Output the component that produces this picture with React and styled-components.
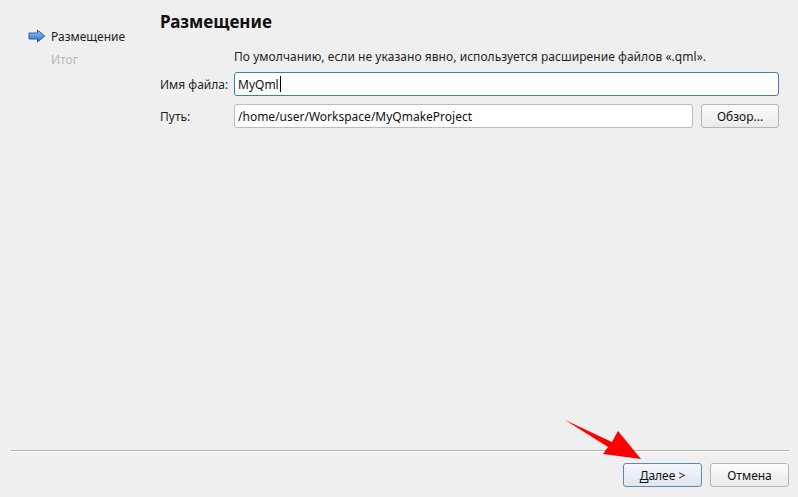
import styled, { createGlobalStyle } from 'styled-components';

const GlobalStyle = createGlobalStyle`
  html, body {
    margin: 0;
    padding: 0;
    background: #efefef;
  }
  body {
    font-family: 'Noto Sans', 'Open Sans', sans-serif;
    color: #1f1f1f;
    font-size: 12px;
  }
`;

const steps = [
  { id: 1, title: 'Размещение', active: true },
  { id: 2, title: 'Итог', active: false },
];

const StepArrow = () => (
  <svg width='18' height='14' viewBox='0 0 18 14'>
    <defs>
      <linearGradient id='ag' x1='0' y1='0' x2='0' y2='1'>
        <stop offset='0' stopColor='#a9cdf7' />
        <stop offset='0.5' stopColor='#5a98e6' />
        <stop offset='1' stopColor='#2f6cc4' />
      </linearGradient>
    </defs>
    <path
      d='M1 4 H9.5 V1 L16.8 7 L9.5 13 V10 H1 Z'
      fill='url(#ag)'
      stroke='#2c5d9f'
      strokeWidth='1'
      strokeLinejoin='round'
    />
  </svg>
);

const Wizard = () => {
  return (
    <Page>
      <Top>
        <Sidebar>
          {steps.map(({ id, title, active }) => (
            <Step key={id} $active={active}>
              <IconSlot>{active && <StepArrow />}</IconSlot>
              {title}
            </Step>
          ))}
        </Sidebar>

        <Main>
          <Title>Размещение</Title>
          <Hint>
            По умолчанию, если не указано явно, используется расширение файлов «.qml».
          </Hint>
          <Form>
            <Label>Имя файла:</Label>
            <Field $focused>
              MyQml
              <Caret />
            </Field>
            <Label>Путь:</Label>
            <PathRow>
              <Field>/home/user/Workspace/MyQmakeProject</Field>
              <Button $w={78}>Обзор...</Button>
            </PathRow>
          </Form>
        </Main>
      </Top>

      <Separator />

      <Footer>
        <Button $w={79} $default>
          <u>Д</u>алее &gt;
        </Button>
        <Button $w={79}>Отмена</Button>
      </Footer>

      <Annotation width='90' height='44' viewBox='0 0 90 44'>
        <path
          d='M0 0 L47 22 L53 11 L76 39 L38 34 L43 27 Z'
          fill='#ff0000'
        />
      </Annotation>
    </Page>
  );
};

const App = () => (
  <>
    <GlobalStyle />
    <Wizard />
  </>
);

const Page = styled.div`
  position: relative;
  width: 798px;
  height: 497px;
  display: flex;
  flex-direction: column;
  overflow: hidden;
`;

const Top = styled.div`
  flex: 1;
  display: flex;
`;

const Sidebar = styled.ul`
  list-style: none;
  margin: 0;
  padding: 27px 0 0 28px;
  width: 122px;
  display: flex;
  flex-direction: column;
  gap: 5px;
`;

const Step = styled.li`
  display: flex;
  align-items: center;
  gap: 5px;
  height: 18px;
  font-size: 12px;
  color: ${({ $active }) => ($active ? '#1f1f1f' : '#b8b8b8')};
`;

const IconSlot = styled.span`
  width: 18px;
  height: 14px;
  display: flex;
`;

const Main = styled.div`
  flex: 1;
  padding: 11px 19px 0 10px;
`;

const Title = styled.h1`
  margin: 0 0 16px;
  font-size: 17px;
  line-height: 22px;
  font-weight: 700;
  color: #111;
`;

const Hint = styled.div`
  margin: 0 0 7px 74px;
  font-size: 12px;
  line-height: 16px;
  letter-spacing: 0.05px;
`;

const Form = styled.div`
  display: grid;
  grid-template-columns: 74px 1fr;
  grid-auto-rows: 24px;
  row-gap: 8px;
  align-items: center;
`;

const Label = styled.div`
  font-size: 12px;
`;

const PathRow = styled.div`
  display: flex;
  gap: 8px;
  align-items: center;
`;

const Field = styled.div`
  flex: 1;
  box-sizing: border-box;
  height: 24px;
  display: flex;
  align-items: center;
  padding: 0 3px;
  background: #fff;
  border: 1px solid ${({ $focused }) => ($focused ? '#3d7fb6' : '#bcbcbc')};
  border-radius: 3px;
  font-size: 12px;
  color: #111;
`;

const Caret = styled.span`
  display: inline-block;
  width: 1px;
  height: 16px;
  margin-left: 1px;
  background: #000;
`;

const Separator = styled.hr`
  margin: 0 9px 0 11px;
  height: 0;
  border: none;
  border-top: 1px solid #b4b4b4;
  border-bottom: 1px solid #fff;
`;

const Footer = styled.div`
  display: flex;
  justify-content: flex-end;
  gap: 8px;
  padding: 11px 9px 10px;
`;

const Button = styled.button`
  box-sizing: border-box;
  width: ${({ $w }) => $w}px;
  height: 24px;
  padding: 0;
  font-family: inherit;
  font-size: 12px;
  color: #111;
  border-radius: 3px;
  border: 1px solid ${({ $default }) => ($default ? '#5b8ab5' : '#b6b6b6')};
  background: ${({ $default }) =>
    $default
      ? 'linear-gradient(#f4f7fa, #dfe6ed)'
      : 'linear-gradient(#fcfcfc, #e9e9e9)'};

  u {
    text-decoration-thickness: 1px;
    text-underline-offset: 2px;
  }
`;

const Annotation = styled.svg`
  position: absolute;
  left: 565px;
  top: 420px;
  pointer-events: none;
`;

export default App;
